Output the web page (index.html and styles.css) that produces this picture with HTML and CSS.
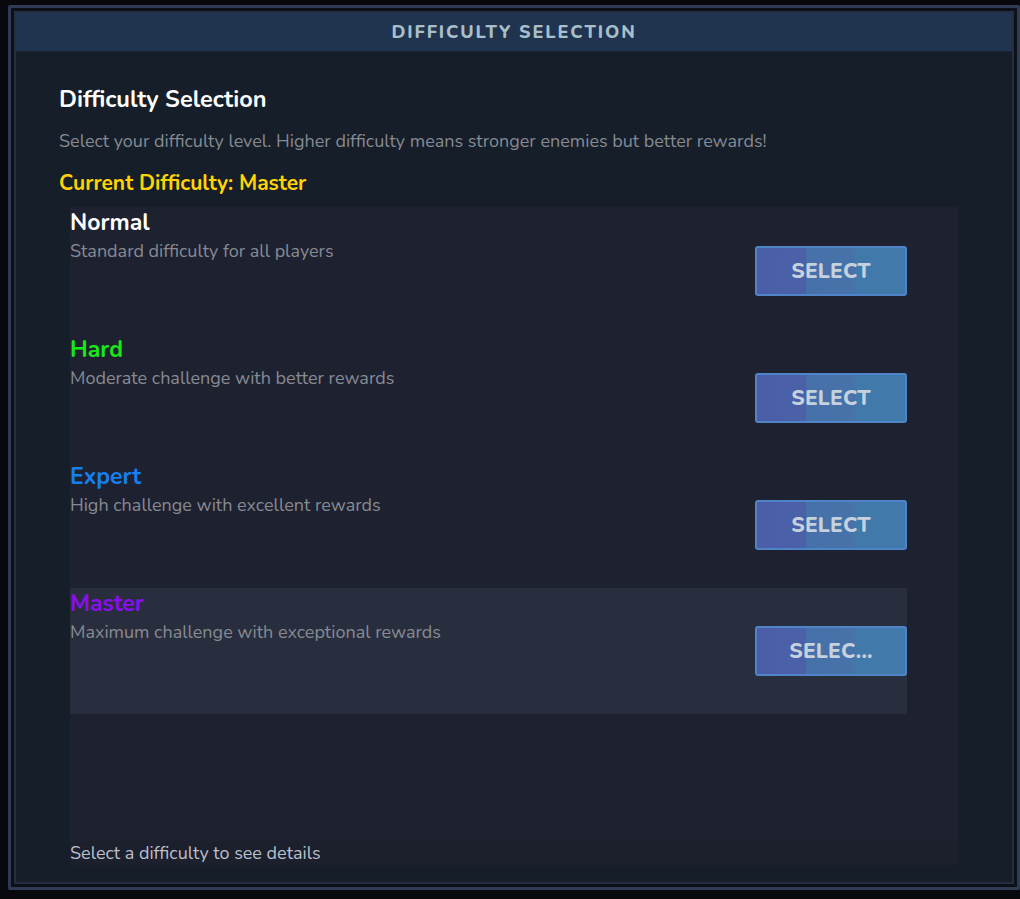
FILE: index.html
```html
<!DOCTYPE html>
<html>
<head>
<meta charset="utf-8">
<link rel="stylesheet" href="styles.css">
</head>
<body>
<div class="frame">
  <div class="window">
    <div class="header">DIFFICULTY SELECTION</div>
    <div class="content">
      <h1 class="title">Difficulty Selection</h1>
      <p class="subtitle">Select your difficulty level. Higher difficulty means stronger enemies but better rewards!</p>
      <p class="current">Current Difficulty: Master</p>
      <div class="panel">
        <div class="list">
          <div class="row">
            <div class="info">
              <div class="name normal">Normal</div>
              <div class="desc">Standard difficulty for all players</div>
            </div>
            <button class="btn">SELECT</button>
          </div>
          <div class="row">
            <div class="info">
              <div class="name hard">Hard</div>
              <div class="desc">Moderate challenge with better rewards</div>
            </div>
            <button class="btn">SELECT</button>
          </div>
          <div class="row">
            <div class="info">
              <div class="name expert">Expert</div>
              <div class="desc">High challenge with excellent rewards</div>
            </div>
            <button class="btn">SELECT</button>
          </div>
          <div class="row active">
            <div class="info">
              <div class="name master">Master</div>
              <div class="desc">Maximum challenge with exceptional rewards</div>
            </div>
            <button class="btn">SELEC...</button>
          </div>
        </div>
        <div class="details">Select a difficulty to see details</div>
      </div>
    </div>
  </div>
</div>
</body>
</html>
```
FILE: styles.css
```css
* { box-sizing: border-box; }
html, body {
  margin: 0;
  padding: 0;
  background: #07090c;
  width: 1020px;
  height: 899px;
  overflow: hidden;
  font-family: "Nunito", "Lato", "Noto Sans", sans-serif;
}
.frame {
  margin: 5px 0 0 8px;
  width: 1012px;
  height: 885px;
  border: 3px solid #313a55;
  background: #0c1017;
  padding: 3px;
  border-radius: 2px;
}
.window {
  height: 100%;
  border: 2px solid #252d40;
  background: #161e29;
  display: flex;
  flex-direction: column;
}
.header {
  height: 39px;
  background: #20344f;
  color: #a8bfca;
  font-family: "Nunito", "Noto Sans", sans-serif;
  font-weight: 800;
  font-size: 18px;
  letter-spacing: 1.9px;
  display: flex;
  align-items: center;
  justify-content: center;
  border-bottom: 1px solid #182232;
}
.content {
  flex: 1;
  padding: 32px 44px 17px 43px;
  display: flex;
  flex-direction: column;
}
.title {
  margin: 0;
  font-size: 23.5px;
  font-weight: 700;
  color: #ffffff;
  line-height: 30px;
}
.subtitle {
  margin: 15px 0 0;
  font-size: 18px;
  color: #858a93;
  line-height: 24px;
}
.current {
  margin: 17px 0 0;
  font-size: 21px;
  font-weight: 700;
  color: #ffd400;
  line-height: 26px;
}
.panel {
  margin: 11px 10px 0 11px;
  flex: 1;
  background: #1e2230;
  display: flex;
  flex-direction: column;
}
.list {
  flex: 1;
  display: flex;
  flex-direction: column;
  width: 837px;
}
.row {
  height: 127px;
  display: flex;
  align-items: center;
  justify-content: space-between;
}
.row.active {
  background: #292e3e;
  height: 126px;
}
.info {
  align-self: flex-start;
  padding-top: 1px;
}
.name {
  font-size: 23px;
  font-weight: 700;
  line-height: 30px;
}
.normal { color: #ffffff; }
.hard { color: #17e817; }
.expert { color: #1581f0; }
.master { color: #8a0ef2; }
.desc {
  font-size: 18px;
  color: #878a93;
  line-height: 27px;
}
.btn {
  width: 152px;
  height: 50px;
  border: 2px solid #4f84c8;
  border-radius: 3px;
  background: linear-gradient(90deg, #4b5ea7 0%, #4a61a8 33%, #4670a9 33%, #4673a9 66%, #4279ab 66%, #4279ab 100%);
  color: #c5d2de;
  font-family: "Nunito", "Lato", "Noto Sans", sans-serif;
  font-weight: 800;
  font-size: 21px;
  letter-spacing: 0.2px;
  padding: 0;
}
.details {
  height: 24px;
  background: #1c202c;
  color: #b9bfcc;
  font-size: 18px;
  line-height: 24px;
}
```
